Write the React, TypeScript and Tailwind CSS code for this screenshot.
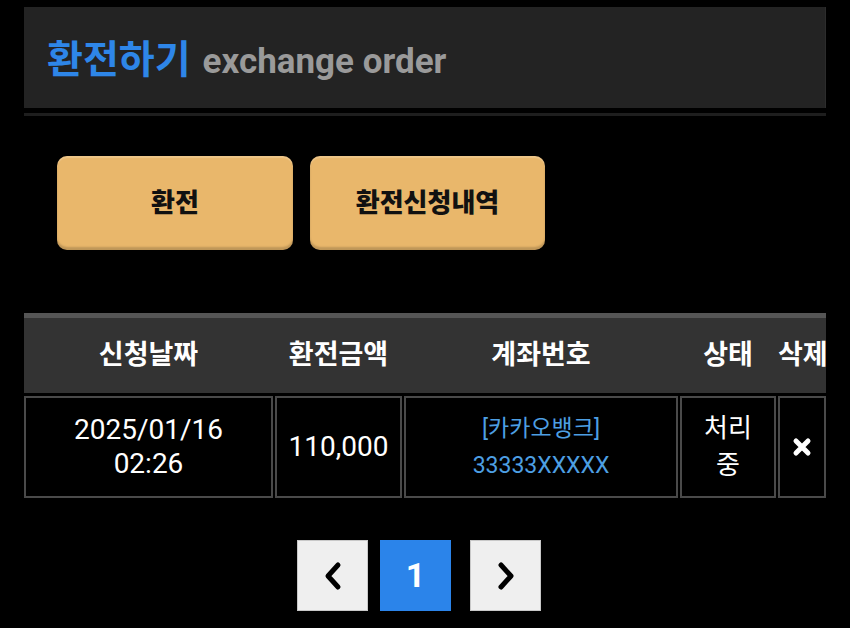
const font = "font-['Roboto','Noto_Sans_CJK_KR',sans-serif]";

const cols = "grid grid-cols-[249px_127px_274px_96px_48px] gap-x-[2px]";

function Chevron({ dir }: { dir: "left" | "right" }) {
  return (
    <svg width="22" height="32" viewBox="0 0 22 32" fill="none">
      <polyline
        points={dir === "left" ? "16,5 6,16 16,27" : "6,5 16,16 6,27"}
        stroke="#000"
        strokeWidth="5"
        strokeLinecap="round"
        strokeLinejoin="round"
      />
    </svg>
  );
}

export default function App() {
  return (
    <div className={`w-[850px] h-[628px] overflow-hidden bg-black px-6 pt-[7px] ${font}`}>
      {/* title */}
      <div className="h-[101px] bg-[#232323] border-r border-[#2c2c2c] flex items-center pl-[23px] pt-[5px] gap-[12px]">
        <h1 className="text-[39px] font-bold text-[#2e86e8] leading-none">환전하기</h1>
        <span className="text-[35px] font-bold text-[#9a9a9a] leading-none mt-[2px]">exchange order</span>
      </div>
      <div className="mt-[5px] h-[3px] bg-[#1e1e1e]" />

      {/* tabs */}
      <div className="mt-[40px] ml-[33px] flex gap-[17px]">
        <button className="w-[236px] h-[94px] rounded-[10px] bg-[#e9b76b] shadow-[inset_0_-3px_2px_rgba(0,0,0,0.18),inset_0_2px_1px_rgba(255,255,255,0.2)] text-[26px] font-extrabold text-[#111]">
          환전
        </button>
        <button className="w-[235px] h-[94px] rounded-[10px] bg-[#e9b76b] shadow-[inset_0_-3px_2px_rgba(0,0,0,0.18),inset_0_2px_1px_rgba(255,255,255,0.2)] text-[26px] font-extrabold text-[#111]">
          환전신청내역
        </button>
      </div>

      {/* table */}
      <div className="mt-[63px]">
        <div className={`${cols} h-[80px] bg-[#333] border-t-[5px] border-[#555] items-center text-[27px] font-bold text-white`}>
          <div className="text-center">신청날짜</div>
          <div className="text-center">환전금액</div>
          <div className="text-center">계좌번호</div>
          <div className="text-center">상태</div>
          <div className="text-center whitespace-nowrap">삭제</div>
        </div>
        <div className={`${cols} mt-[3px] h-[102px] text-white`}>
          <div className="border-2 border-[#4a4a4a] flex flex-col items-center justify-center text-[28px] leading-[34px]">
            <span>2025/01/16</span>
            <span>02:26</span>
          </div>
          <div className="border-2 border-[#4a4a4a] flex items-center justify-center text-[28px]">110,000</div>
          <div className="border-2 border-[#4a4a4a] flex flex-col items-center justify-center text-[23px] leading-[37px] text-[#4d9fe3]">
            <span>[카카오뱅크]</span>
            <span>33333XXXXX</span>
          </div>
          <div className="border-2 border-[#4a4a4a] flex flex-col items-center justify-center text-[26px] leading-[37px]">
            <span>처리</span>
            <span>중</span>
          </div>
          <div className="border-2 border-[#4a4a4a] flex items-center justify-center">
            <svg width="20" height="20" viewBox="0 0 20 20">
              <path d="M4 4 L16 16 M16 4 L4 16" stroke="#fff" strokeWidth="5" strokeLinecap="round" />
            </svg>
          </div>
        </div>
      </div>

      {/* pagination */}
      <div className="mt-[42px] ml-[273px] flex">
        <button className="w-[71px] h-[71px] bg-[#efefef] border border-[#c8c8c8] flex items-center justify-center">
          <Chevron dir="left" />
        </button>
        <button className="ml-[12px] w-[71px] h-[71px] bg-[#2b84ea] text-white text-[34px] font-bold flex items-center justify-center">
          1
        </button>
        <button className="ml-[19px] w-[71px] h-[71px] bg-[#efefef] border border-[#c8c8c8] flex items-center justify-center">
          <Chevron dir="right" />
        </button>
      </div>
    </div>
  );
}
